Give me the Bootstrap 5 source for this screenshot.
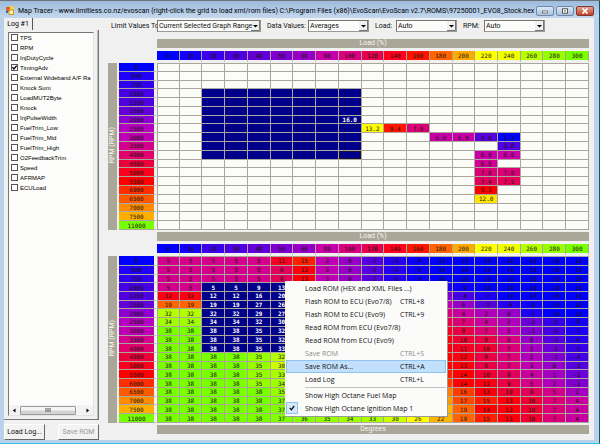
<!DOCTYPE html>
<html lang="en">
<head>
<meta charset="utf-8">
<meta name="viewport" content="width=device-width, initial-scale=1">
<title>Map Tracer</title>
<link href="https://cdn.jsdelivr.net/npm/bootstrap@5.3.0/dist/css/bootstrap.min.css" rel="stylesheet">
<style>
:root { --face: #f0f0f0; --bar: #aaa698; --ui: Roboto, "Liberation Sans", sans-serif; --seg: "Open Sans", "Noto Sans", sans-serif; }
body { font: 7px/10px var(--ui); color: #111; background: #b9d1ea; }
.app-window { border-top: 1px solid #6f7276; border-right: 1px solid #0c5a5e; border-bottom: 1px solid #35c4e8; }
.titlebar { height: 17px; padding: 2px 5px 0 6px; font: 7px/16px var(--ui); color: #000; background: linear-gradient(#9dbbdd, #c3d8ee); }
.cap-btn { width: 18px; height: 10px; padding: 0; border: 1px solid #7289a5; border-radius: 2px; background: linear-gradient(#dbe8f5, #a9c2de); line-height: 0; }
.cap-close { border-color: #7c3a32; background: linear-gradient(#e3a08f, #c4412a); }
.client { margin: 0 5px 3px 4px; background: var(--face); }
.sidebar { width: 95px; }
.log-tab { width: 29px; height: 12px; padding: 0; border: 0; border-right: 1px solid #555; background: var(--face); font-size: 7px; line-height: 12px; }
.tab-page { border-right: 1px solid #777; border-bottom: 1px solid #777; padding: 2px 4px 3px 4px; box-shadow: inset -1px 0 #bbb; }
.log-list { border: 1px solid #777; border-right-color: #e4e4e4; border-bottom-color: #e4e4e4; background: #fcfcfa; overflow: hidden; }
.log-list label { height: 10px; padding-left: 2px; gap: 2px; white-space: nowrap; font: 6px/10px "Liberation Sans", Arial, sans-serif; color: #000; }
.log-list input { appearance: none; flex: none; width: 7px; height: 7px; margin: 1px 0 0 0; border: 1px solid #555; background: #fff; }
.log-list input:checked { background: #fff url("data:image/svg+xml,%3Csvg xmlns='http://www.w3.org/2000/svg' viewBox='0 0 7 7'%3E%3Cpath d='M1 3.2L2.8 5.2L6 1.5' fill='none' stroke='%23000' stroke-width='1.5'/%3E%3C/svg%3E") center/6px; }
.scroll-track { height: 10px; padding: 0 3px; background: #f3f3f3; }
.scroll-thumb { width: 56px; height: 9px; margin-right: 10px; border: 1px solid #999; border-radius: 1px; background: linear-gradient(#f5f5f5 45%, #d3d3d3 55%); }
.raised { width: 41px; height: 16px; padding: 0; border: 1px solid #fff; border-right-color: #666; border-bottom-color: #666; background: #f2f2f2; font-size: 7px; line-height: 12px; color: #111; }
.raised:disabled { color: #999; }
.filters { height: 15px; padding: 2px 0 0 4px; line-height: 12px; }
.filters label { margin-left: 6px; }
.filters .lbl-range { width: 46px; margin-left: 0; }
.lbl-wide { width: 41px; } .lbl-short { width: 21px; }
.combo { appearance: none; height: 12px; padding: 0 0 0 1px; border: 1px solid #777; border-right-color: #999; border-bottom-color: #999; border-radius: 0; color: #111; font: 7px/10px var(--ui); background: #fcfcfa url("data:image/svg+xml,%3Csvg xmlns='http://www.w3.org/2000/svg' width='9' height='10'%3E%3Crect width='9' height='10' fill='%23f0f0f0'/%3E%3Cpath d='M8.5 0V9.5H0' fill='none' stroke='%23777'/%3E%3Cpath d='M2 4H7L4.5 6.5Z' fill='%23000'/%3E%3C/svg%3E") right center no-repeat; }
.w-range { width: 104px; } .w-auto61 { width: 61px; }
.map-table { width: 100%; height: 191px; table-layout: fixed; border-collapse: separate; border-spacing: 0; font: 6px/7px "DejaVu Sans Mono", monospace; text-align: center; color: #1a1408; }
.map-table th, .map-table td { padding: 0; font-weight: 400; overflow: hidden; white-space: nowrap; }
.map-table .c-axis { width: 11px; } .map-table .c-row { width: 38px; }
.map-table thead tr { height: 12px; }
.map-table .map-corner { border: 0; background: none; }
.map-table .axis-title { color: #f6f6f2; background: var(--bar); background-clip: padding-box; font: 7px/9px var(--ui); }
.map-table .axis-top { border-bottom: 3px solid var(--face); }
.map-table .axis-side { border-right: 2px solid var(--face); }
.axis-side span { writing-mode: vertical-rl; transform: rotate(180deg); }
.map-table .col-head { border-right: 1px solid #aaa69c; border-bottom: 3px solid var(--face); background-clip: padding-box; }
.map-table .row-head { border-right: 3px solid var(--face); border-bottom: 1px solid #aaa69c; background-clip: padding-box; }
.map-table td { border-right: 1px solid #aaa69c; border-bottom: 1px solid #aaa69c; background: #fcfcf9; }
.map-table tbody tr:first-child td { border-top: 1px solid #aaa69c; }
.map-table td:nth-child(2), .map-table tr:first-child td:nth-child(3) { border-left: 1px solid #aaa69c; }
.map-table tbody tr:first-child td:nth-child(2) { border-left: 0; }
.map-table td.picked { background: #00008b; color: #fff; font-weight: 700; }
.map-table td.focus-cell { box-shadow: inset 0 0 0 1px #1a1030; }
.axis-foot { height: 9px; margin: 2px 0 0 49px; background: var(--bar); color: #f6f6f2; text-align: center; line-height: 9px; }
.ctx-menu { position: absolute; left: 177px; top: 49px; width: 163px; padding: 1px; border-right: 1px solid #999; border-bottom: 1px solid #999; background: #fbfbfa; font: 7px/13px var(--seg); }
.ctx-menu button { display: grid; grid-template-columns: 19px 1fr 46px; width: 100%; height: 13px; padding: 0; border: 0; background: none; text-align: left; color: #111; font: inherit; white-space: nowrap; }
.ctx-menu button:disabled { color: #8b8b8b; }
.ctx-menu .hot { background: #c2e0fb; box-shadow: inset 0 0 0 1px #90c4f0; }
.ctx-menu hr { margin: 1px 0; margin-left: 19px; border: 0; border-top: 1px solid #c4c4c4; opacity: 1; }
.tick-box { width: 12px; height: 12px; border: 1px solid #90c4f0; background: #d4e9fb; line-height: 0; }
.map-host { position: relative; margin: 2px 5px 0 5px; }
.cap-group { gap: 2px; }
</style>
</head>
<body>
<div class="app-window min-vh-100 d-flex flex-column">
  <header class="titlebar d-flex align-items-center">
    <svg class="flex-shrink-0" width="8" height="9" viewBox="0 0 8 9" aria-hidden="true"><rect x="0" y="1" width="4" height="5" fill="#d8622a"/><rect x="4" y="0" width="4" height="4" fill="#f4d24a"/><rect x="3" y="4" width="4.5" height="4.5" fill="#fff1a0" stroke="#c89b28"/><rect x="0" y="5" width="2" height="2" fill="#3864b8"/></svg>
    <span class="flex-grow-1 text-nowrap ps-1">Map Tracer - www.limitless.co.nz/evoscan (right-click the grid to load xml/rom files) C:\Program Files (x86)\EvoScan\EvoScan v2.7\ROMS\97250001_EVO8_Stock.hex</span>
    <div class="cap-group d-flex flex-shrink-0">
      <button class="cap-btn" aria-label="Minimize"><svg width="8" height="6" viewBox="0 0 8 6"><rect x="1.5" y="3" width="5" height="2" fill="#fff" stroke="#555" stroke-width=".7"/></svg></button>
      <button class="cap-btn" aria-label="Maximize"><svg width="8" height="6" viewBox="0 0 8 6"><rect x="1.5" y=".8" width="5" height="4.4" fill="#fff" stroke="#555"/><rect x="3" y="2.5" width="2" height="1" fill="#555"/></svg></button>
      <button class="cap-btn cap-close" aria-label="Close"><svg width="8" height="6" viewBox="0 0 8 6"><path d="M1.5 .5L6.5 5.5M6.5 .5L1.5 5.5" stroke="#fff" stroke-width="1.7"/></svg></button>
    </div>
  </header>

  <main class="client d-flex flex-grow-1">
    <aside class="sidebar d-flex flex-column flex-shrink-0">
      <button class="log-tab">Log #1</button>
      <div class="tab-page d-flex flex-column flex-grow-1">
        <div class="log-list d-flex flex-column flex-grow-1">
          <div id="logItems" class="flex-grow-1"></div>
          <div class="scroll-track d-flex align-items-center justify-content-between">
            <svg width="4" height="5" viewBox="0 0 4 5"><path d="M3.5 .5V4.5L.8 2.5Z"/></svg>
            <div class="scroll-thumb d-flex align-items-center justify-content-center ms-1"><svg width="6" height="4" viewBox="0 0 6 4"><path d="M1 0V4M3 0V4M5 0V4" stroke="#555"/></svg></div>
            <svg width="4" height="5" viewBox="0 0 4 5"><path d="M.5 .5V4.5L3.2 2.5Z"/></svg>
          </div>
        </div>
      </div>
      <div class="d-flex justify-content-between mt-1">
        <button class="raised">Load Log...</button>
        <button class="raised" disabled>Save ROM</button>
      </div>
    </aside>

    <section class="flex-grow-1 ps-1">
      <div class="filters d-flex text-nowrap ms-1">
        <label for="fRange" class="lbl-range">Limit Values To:</label>
        <select id="fRange" class="combo w-range"><option>Current Selected Graph Range</option></select>
        <label for="fData" class="lbl-wide">Data Values:</label>
        <select id="fData" class="combo w-auto61"><option>Averages</option></select>
        <label for="fLoad" class="lbl-short">Load:</label>
        <select id="fLoad" class="combo w-auto61"><option>Auto</option></select>
        <label for="fRpm" class="lbl-short">RPM:</label>
        <select id="fRpm" class="combo w-auto61"><option>Auto</option></select>
      </div>
      <div class="map-host pt-1"><table class="map-table" id="logMap"></table></div>
      <div class="map-host">
        <table class="map-table" id="romMap"></table>
        <div class="axis-foot">Degrees</div>
        <div class="ctx-menu" role="menu" id="menu"></div>
      </div>
    </section>
  </main>
</div>
<script src="https://cdn.jsdelivr.net/npm/bootstrap@5.3.0/dist/js/bootstrap.bundle.min.js"></script>
<script>
const logs = ["TPS","RPM","InjDutyCycle","TimingAdv","External Wideband A/F Ra","Knock Sum","LoadMUT2Byte","Knock","InjPulseWidth","FuelTrim_Low","FuelTrim_Mid","FuelTrim_High","O2FeedbackTrim","Speed","AFRMAP","ECULoad"];
document.getElementById("logItems").innerHTML = logs.map(n =>
  `<label class="d-flex"><input type="checkbox"${n === "TimingAdv" ? " checked" : ""}>${n}</label>`).join("");

const loads = [0,10,20,30,40,50,60,80,100,120,140,160,180,200,220,240,260,280,300];
const loadColors = ["#0000ff","#1400fa","#3c00eb","#5000e0","#6400d7","#7d00d0","#9600c8","#c800aa","#dc0082","#e60050","#ff0020","#ff1400","#ff6400","#ffaa00","#ffff00","#f0ff00","#b4ff00","#96ff00","#78ff00"];
const rpms = [0,500,750,1000,1250,1500,2000,2500,3000,3500,4000,4500,5000,5500,6000,6500,7000,7500,11000];
const rpmColors = ["#0000ff","#2000f8","#3000f0","#4600e6","#5000e0","#6400d8","#8c00d2","#b400c0","#be00b4","#d2008c","#e1006e","#eb003c","#fa001e","#ff0000","#ff2d00","#ff5a00","#ff8c00","#ffaf00","#78ff00"];

// Timing scale: advance in degrees to colour
const scale = [[-10,0,0,255],[-6,40,0,240],[-3,85,0,224],[0,150,0,200],[3,190,0,180],[5,210,0,140],[7,220,0,120],[8,225,0,90],[10,240,0,50],[12,250,0,20],[14,255,0,0],[16,255,60,0],[19,255,100,0],[22,255,180,0],[26,255,255,0],[32,180,255,0],[35,150,255,0],[38,120,255,0]];
function tint(v) {
  let i = 1;
  while (i < scale.length - 1 && v > scale[i][0]) i++;
  const a = scale[i - 1], b = scale[i], t = (v - a[0]) / (b[0] - a[0]);
  return `rgb(${[1,2,3].map(k => Math.round(a[k] + (b[k] - a[k]) * t)).join()})`;
}
const picked = (r, c) => r >= 3 && r <= 10 && c >= 2 && c <= 8;

function build(id, cell) {
  let h = `<colgroup><col class="c-axis"><col class="c-row">${"<col>".repeat(19)}</colgroup><thead><tr><td colspan="2" class="map-corner"></td><th class="axis-title axis-top" colspan="19">Load (%)</th></tr><tr><td colspan="2" class="map-corner"></td>`;
  h += loads.map((l, i) => `<th class="col-head" style="background-color:${loadColors[i]}">${l}</th>`).join("") + "</tr></thead><tbody>";
  rpms.forEach((rpm, r) => {
    h += "<tr>" + (r ? "" : '<th class="axis-title axis-side" rowspan="19"><span>RPM (RPM)</span></th>');
    h += `<th class="row-head" style="background-color:${rpmColors[r]}">${rpm}</th>`;
    loads.forEach((_, c) => { h += cell(r, c); });
    h += "</tr>";
  });
  document.getElementById(id).innerHTML = h + "</tbody>";
}

const logged = {"6,8":["16.0"],"7,9":["13.2","#ffff00"],"7,10":["9.4","#ff1400"],"7,11":["7.0","#dc0078"],"8,12":["6.0","#c800aa"],"8,13":["6.0","#c800aa"],"8,14":["4.0","#5a00e0"],"8,15":["3.3","#0000ff"],"9,15":["3.8","#5000e0"],"10,14":["6.0","#c800aa"],"10,15":["6.0","#c800aa"],"11,14":["6.5","#d20096"],"12,14":["7.0","#dc0078"],"12,15":["7.0","#dc0078"],"13,14":["7.4","#e1005f"],"13,15":["7.5","#e6005a"],"14,14":["9.3","#ff0000"],"15,14":["12.0","#ffe600"]};
build("logMap", (r, c) => {
  const v = logged[r + "," + c] || [""];
  if (picked(r, c)) return `<td class="picked${r === 10 && c === 8 ? " focus-cell" : ""}">${v[0]}</td>`;
  return v[1] ? `<td style="background-color:${v[1]}">${v[0]}</td>` : "<td></td>";
});

const n = null;
const timing = [
 [5,5,5,5,5,11,15,3,0,-3,-6,-9,-10,-10,-10,-10,-10,-10,-10],
 [5,5,5,5,5,8,13,3,0,-3,-6,-9,-10,-10,-10,-10,-10,-10,-10],
 [5,5,5,5,5,8,13,3,0,-3,-6,-9,-10,-10,-10,-10,-10,-10,-10],
 [5,5,5,5,9,13,n,n,n,n,n,n,-7,-9,-10,-10,-10,-10,-10],
 [12,12,12,12,16,20,n,n,n,n,n,n,-1,-4,-7,-10,-10,-10,-10],
 [19,19,19,19,27,26,n,n,n,n,n,n,3,0,-3,-6,-9,-10,-10],
 [32,32,32,32,29,27,n,n,n,n,n,n,6,4,2,0,-7,-10,-10],
 [34,34,34,34,32,30,n,n,n,n,n,n,9,7,4,2,-2,-5,-8],
 [38,38,38,38,35,32,n,n,n,n,n,n,11,9,7,3,-1,-4,-7],
 [38,38,38,38,35,32,n,n,n,n,n,n,13,10,9,6,0,-3,-6],
 [38,38,38,38,35,33,n,n,n,n,n,n,13,11,10,7,1,-2,-5],
 [38,38,38,38,35,32,n,n,n,n,n,n,14,12,9,7,2,-1,-4],
 [38,38,38,38,35,30,n,n,n,n,n,n,14,13,9,7,3,0,-3],
 [38,38,38,38,35,33,n,n,n,n,n,n,15,14,10,8,4,1,-2],
 [38,38,38,38,35,34,n,n,n,n,n,n,16,14,12,9,5,2,-1],
 [38,38,38,38,38,35,n,n,n,n,n,n,20,16,13,10,8,5,1],
 [38,38,38,38,38,37,n,n,n,n,n,n,21,17,15,13,10,7,4],
 [38,38,38,38,38,37,n,n,n,n,n,n,22,19,14,13,10,7,4],
 [38,38,38,38,38,37,36,35,34,33,30,26,22,19,15,13,10,7,4]];
build("romMap", (r, c) => {
  const v = timing[r][c];
  if (picked(r, c)) return `<td class="picked">${v ?? ""}</td>`;
  const label = c === 12 && r > 2 && r < 18 ? "" : v;
  return v === n ? "<td></td>" : `<td style="background-color:${tint(v)}">${label}</td>`;
});

const items = [["Load ROM (HEX and XML Files ...)"],["Flash ROM to ECU (Evo7/8)","CTRL+8"],["Flash ROM to ECU (Evo9)","CTRL+9"],["Read ROM from ECU (Evo7/8)"],["Read ROM from ECU (Evo9)"],["Save ROM","CTRL+S","off"],["Save ROM As...","CTRL+A","hot"],["Load Log","CTRL+L"],null,["Show High Octane Fuel Map"],["Show High Octane Ignition Map 1","","tick"]];
document.getElementById("menu").innerHTML = items.map(i => !i ? "<hr>" :
  `<button role="menuitem" class="${i[2] === "hot" ? "hot" : ""}"${i[2] === "off" ? " disabled" : ""}><span>${i[2] === "tick" ? '<span class="tick-box d-flex align-items-center justify-content-center"><svg width="6" height="6" viewBox="0 0 6 6"><path d="M.8 3L2.4 4.8L5.2 1" fill="none" stroke="#111" stroke-width="1.3"/></svg></span>' : ""}</span><span>${i[0]}</span><span>${i[1] || ""}</span></button>`).join("");
</script>
</body>
</html>
